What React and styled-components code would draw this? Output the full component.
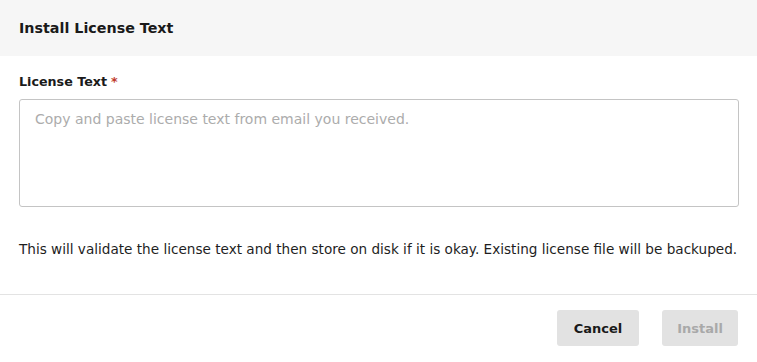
import styled, { createGlobalStyle } from "styled-components"

const Global = createGlobalStyle`
  html, body {
    margin: 0;
    padding: 0;
    background: #ffffff;
    font-family: "DejaVu Sans", "Open Sans", sans-serif;
    color: #1e1e1e;
  }
  * { box-sizing: border-box; }
`

const Dialog = styled.div`
  width: 757px;
  height: 362px;
  background: #ffffff;
  display: flex;
  flex-direction: column;
`

const Header = styled.div`
  height: 56px;
  background: #f6f6f6;
  display: flex;
  align-items: center;
  padding: 0 19px;
`

const Title = styled.h2`
  margin: 0;
  font-size: 14.3px;
  font-weight: 700;
  color: #1a1a1a;
`

const Body = styled.div`
  padding: 17px 18px 0 19px;
  display: flex;
  flex-direction: column;
`

const Label = styled.label`
  font-size: 12.7px;
  font-weight: 700;
  color: #1a1a1a;
  line-height: 18px;
  margin-bottom: 8px;
`

const Required = styled.span`
  color: #c0392b;
  margin-left: 4px;
`

const TextBox = styled.textarea`
  width: 720px;
  height: 108px;
  border: 1px solid #c4c4c4;
  border-radius: 3px;
  padding: 11px 15px;
  font-family: inherit;
  font-size: 14px;
  resize: none;
  outline: none;
  &::placeholder {
    color: #acacac;
  }
`

const Hint = styled.p`
  margin: 33px 0 0;
  font-size: 13.6px;
  line-height: 18px;
  color: #1e1e1e;
`

const Footer = styled.div`
  margin-top: 36px;
  border-top: 1px solid #e3e3e3;
  padding: 15px 19px 0;
  display: flex;
  justify-content: flex-end;
  gap: 23px;
`

const Button = styled.button`
  height: 36px;
  padding: 0 ${p => (p.$disabled ? "15px" : "17px")};
  border: none;
  border-radius: 3px;
  background: #e2e2e2;
  font-family: inherit;
  font-size: 13px;
  font-weight: 700;
  color: ${p => (p.$disabled ? "#a9a9a9" : "#1a1a1a")};
  cursor: ${p => (p.$disabled ? "default" : "pointer")};
`

export default function App() {
  return (
    <Dialog>
      <Global />
      <Header>
        <Title>Install License Text</Title>
      </Header>
      <Body>
        <Label>
          License Text<Required>*</Required>
        </Label>
        <TextBox placeholder="Copy and paste license text from email you received." />
        <Hint>
          This will validate the license text and then store on disk if it is okay. Existing license file will be backuped.
        </Hint>
      </Body>
      <Footer>
        <Button>Cancel</Button>
        <Button $disabled>Install</Button>
      </Footer>
    </Dialog>
  )
}
